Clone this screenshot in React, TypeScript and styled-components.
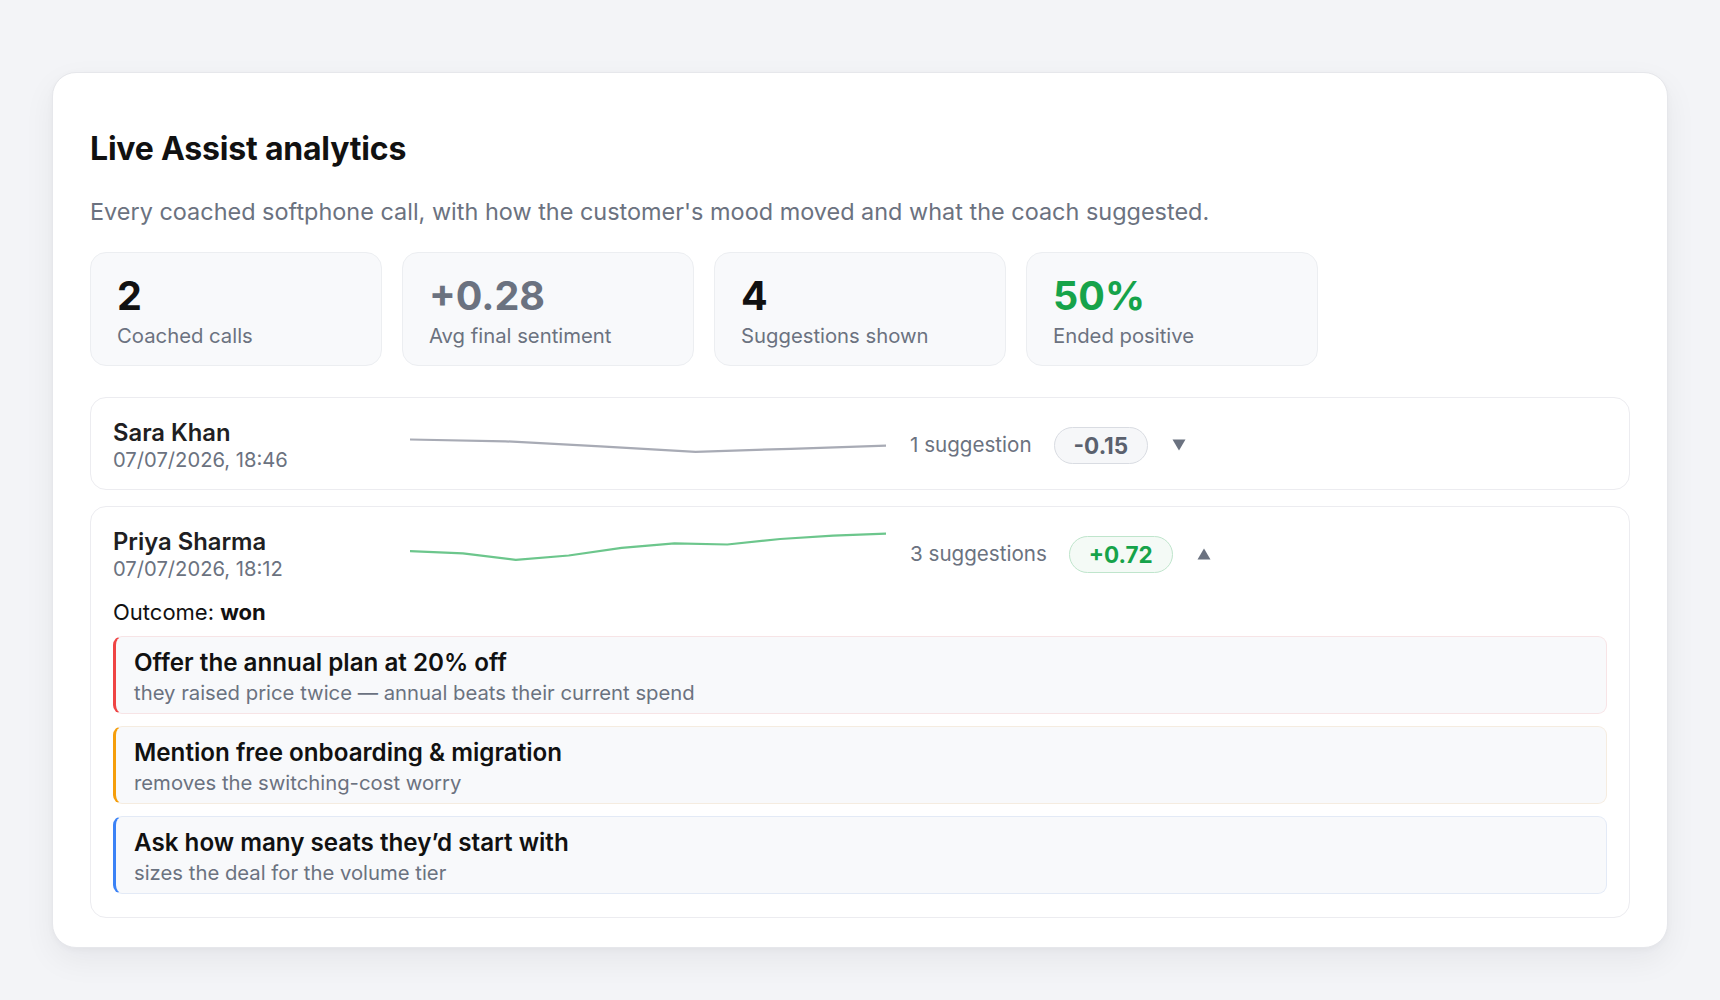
import React from "react";
import styled, { createGlobalStyle } from "styled-components";

const GlobalStyle = createGlobalStyle`
  * { box-sizing: border-box; }
  body {
    margin: 0;
    background: #f3f4f7;
    font-family: Inter, "Noto Sans", "Liberation Sans", sans-serif;
    color: #111827;
    -webkit-font-smoothing: antialiased;
  }
`;

const Page = styled.main`
  padding: 72px 52px 53px;
`;

const Card = styled.section`
  background: #ffffff;
  border: 1px solid #e6e7eb;
  border-radius: 24px;
  padding: 57px 37px 29px;
  box-shadow: 0 12px 32px rgba(17, 24, 39, 0.06), 0 2px 6px rgba(17, 24, 39, 0.03);
`;

const Title = styled.h1`
  margin: 0;
  font-size: 32px;
  line-height: 37px;
  font-weight: 700;
  letter-spacing: -0.2px;
  color: #111111;
`;

const Subtitle = styled.p`
  margin: 30px 0 0;
  font-size: 23.45px;
  line-height: 30px;
  color: #6b7280;
`;

const StatGrid = styled.div`
  margin-top: 25px;
  display: grid;
  grid-template-columns: repeat(4, 292px);
  gap: 20px;
`;

const StatCard = styled.div`
  background: #f8f9fb;
  border: 1px solid #eceef1;
  border-radius: 16px;
  padding: 21px 26px 15px;
  display: flex;
  flex-direction: column;
  gap: 4px;
`;

const toneColor: Record<string, string> = {
  default: "#111111",
  muted: "#6b7280",
  positive: "#16a34a",
};

const StatValue = styled.div<{ $tone: string }>`
  font-size: 39.5px;
  line-height: 44px;
  font-weight: 700;
  color: ${(p) => toneColor[p.$tone]};
`;

const StatLabel = styled.div`
  font-size: 20.3px;
  line-height: 28px;
  color: #6b7280;
`;

const CallList = styled.div`
  margin-top: 31px;
  display: flex;
  flex-direction: column;
  gap: 16px;
`;

const CallRow = styled.article<{ $expanded: boolean }>`
  border: 1px solid #ececf0;
  border-radius: 16px;
  background: #ffffff;
  padding: 20px 22px ${(p) => (p.$expanded ? "23px" : "17px")};
`;

const CallHeader = styled.div`
  display: flex;
  align-items: center;
  gap: 24px;
`;

const CallMeta = styled.div`
  width: 273px;
  flex: none;
  display: flex;
  flex-direction: column;
  gap: 1px;
`;

const CallName = styled.div`
  font-size: 23.8px;
  line-height: 29px;
  font-weight: 600;
  color: #1f1f23;
`;

const CallDate = styled.div`
  font-size: 20.2px;
  line-height: 24px;
  color: #6b7280;
`;

const SparkSvg = styled.svg`
  flex: none;
  display: block;
`;

const CallStats = styled.div`
  display: flex;
  align-items: center;
  gap: 22px;
`;

const SuggestionCount = styled.span`
  font-size: 20.6px;
  line-height: 28px;
  color: #6b7280;
`;

const ScoreBadge = styled.span<{ $positive: boolean }>`
  display: inline-flex;
  align-items: center;
  justify-content: center;
  padding: 4px 19px;
  border-radius: 999px;
  font-size: 22.5px;
  line-height: 27px;
  font-weight: 700;
  border: 1.5px solid ${(p) => (p.$positive ? "#bfe5cc" : "#d9dce2")};
  background: ${(p) => (p.$positive ? "#f4faf6" : "#f6f7f9")};
  color: ${(p) => (p.$positive ? "#16a34a" : "#5b616e")};
`;

const ToggleButton = styled.button`
  border: none;
  background: transparent;
  padding: 0;
  margin-left: 2px;
  width: 14px;
  height: 14px;
  display: flex;
  align-items: center;
  justify-content: center;
  color: #6b7280;
  cursor: pointer;
`;

const Outcome = styled.div`
  margin-top: 17px;
  font-size: 22px;
  line-height: 28px;
  color: #111111;

  strong {
    font-weight: 700;
  }
`;

const SuggestionList = styled.div`
  margin-top: 10px;
  display: flex;
  flex-direction: column;
  gap: 12px;
`;

const SuggestionCard = styled.div<{ $accent: string; $tint: string }>`
  background: #f8f9fb;
  border: 1px solid ${(p) => p.$tint};
  border-left: 3px solid ${(p) => p.$accent};
  border-radius: 9px;
  padding: 11px 18px 7px;
  display: flex;
  flex-direction: column;
  gap: 3px;
`;

const SuggestionTitle = styled.div`
  font-size: 24.2px;
  line-height: 29px;
  font-weight: 600;
  color: #111111;
`;

const SuggestionReason = styled.div`
  font-size: 20.3px;
  line-height: 26px;
  color: #6b7280;
`;

type Suggestion = { title: string; reason: string; accent: string; tint: string };
type Call = {
  name: string;
  date: string;
  ys: number[];
  stroke: string;
  count: string;
  score: string;
  positive: boolean;
  expanded: boolean;
  outcome?: string;
  suggestions: Suggestion[];
};

const SPARK_W = 476;
const SPARK_H = 44;

const calls: Call[] = [
  {
    name: "Sara Khan",
    date: "07/07/2026, 18:46",
    ys: [16.5, 18.3, 23.3, 28.8, 25.8, 22.6],
    stroke: "#a8abb5",
    count: "1 suggestion",
    score: "-0.15",
    positive: false,
    expanded: false,
    suggestions: [],
  },
  {
    name: "Priya Sharma",
    date: "07/07/2026, 18:12",
    ys: [19.1, 21.3, 27.9, 23.5, 15.8, 11.4, 12.5, 7.0, 3.7, 1.6],
    stroke: "#6cc68c",
    count: "3 suggestions",
    score: "+0.72",
    positive: true,
    expanded: true,
    outcome: "won",
    suggestions: [
      {
        title: "Offer the annual plan at 20% off",
        reason: "they raised price twice — annual beats their current spend",
        accent: "#ef4444",
        tint: "#f7e4e6",
      },
      {
        title: "Mention free onboarding & migration",
        reason: "removes the switching-cost worry",
        accent: "#f59e0b",
        tint: "#f5ece0",
      },
      {
        title: "Ask how many seats they’d start with",
        reason: "sizes the deal for the volume tier",
        accent: "#3b82f6",
        tint: "#e3eaf6",
      },
    ],
  },
];

const stats = [
  { value: "2", label: "Coached calls", tone: "default" },
  { value: "+0.28", label: "Avg final sentiment", tone: "muted" },
  { value: "4", label: "Suggestions shown", tone: "default" },
  { value: "50%", label: "Ended positive", tone: "positive" },
];

function Sparkline({ ys, stroke }: { ys: number[]; stroke: string }) {
  const step = SPARK_W / (ys.length - 1);
  const points = ys.map((y, i) => `${(i * step).toFixed(1)},${y}`).join(" ");
  return (
    <SparkSvg width={SPARK_W} height={SPARK_H} viewBox={`0 0 ${SPARK_W} ${SPARK_H}`}>
      <polyline
        points={points}
        fill="none"
        stroke={stroke}
        strokeWidth={2.2}
        strokeLinejoin="round"
        strokeLinecap="round"
      />
    </SparkSvg>
  );
}

function Caret({ up }: { up: boolean }) {
  return (
    <svg width="14" height="12" viewBox="0 0 14 12">
      {up ? (
        <polygon points="7,0.5 13.5,11.5 0.5,11.5" fill="currentColor" />
      ) : (
        <polygon points="0.5,0.5 13.5,0.5 7,11.5" fill="currentColor" />
      )}
    </svg>
  );
}

export default function App() {
  return (
    <Page>
      <GlobalStyle />
      <Card>
        <Title>Live Assist analytics</Title>
        <Subtitle>
          Every coached softphone call, with how the customer's mood moved and what the coach suggested.
        </Subtitle>
        <StatGrid>
          {stats.map((s) => (
            <StatCard key={s.label}>
              <StatValue $tone={s.tone}>{s.value}</StatValue>
              <StatLabel>{s.label}</StatLabel>
            </StatCard>
          ))}
        </StatGrid>
        <CallList>
          {calls.map((c) => (
            <CallRow key={c.name} $expanded={c.expanded}>
              <CallHeader>
                <CallMeta>
                  <CallName>{c.name}</CallName>
                  <CallDate>{c.date}</CallDate>
                </CallMeta>
                <Sparkline ys={c.ys} stroke={c.stroke} />
                <CallStats>
                  <SuggestionCount>{c.count}</SuggestionCount>
                  <ScoreBadge $positive={c.positive}>{c.score}</ScoreBadge>
                  <ToggleButton aria-label={c.expanded ? "Collapse" : "Expand"}>
                    <Caret up={c.expanded} />
                  </ToggleButton>
                </CallStats>
              </CallHeader>
              {c.expanded && (
                <>
                  <Outcome>
                    Outcome: <strong>{c.outcome}</strong>
                  </Outcome>
                  <SuggestionList>
                    {c.suggestions.map((s) => (
                      <SuggestionCard key={s.title} $accent={s.accent} $tint={s.tint}>
                        <SuggestionTitle>{s.title}</SuggestionTitle>
                        <SuggestionReason>{s.reason}</SuggestionReason>
                      </SuggestionCard>
                    ))}
                  </SuggestionList>
                </>
              )}
            </CallRow>
          ))}
        </CallList>
      </Card>
    </Page>
  );
}
